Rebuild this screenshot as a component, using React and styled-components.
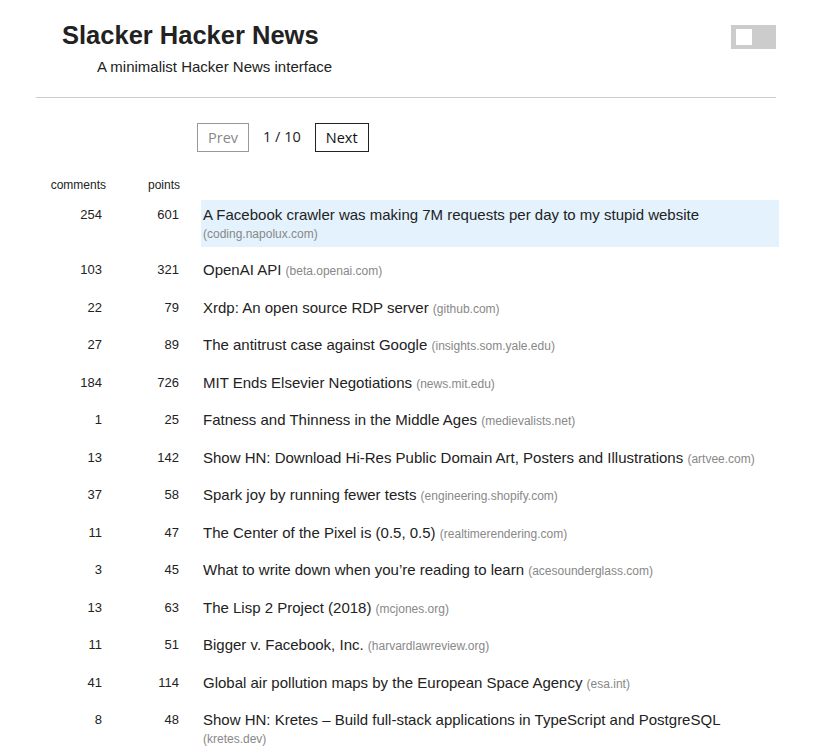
import React from "react";
import styled, { createGlobalStyle } from "styled-components";

const Global = createGlobalStyle`
  html, body { margin: 0; padding: 0; background: #fff; }
  body { font-family: "Liberation Sans", Arial, sans-serif; color: #222; }
`;

const Page = styled.div`
  width: 740px;
  margin-left: 36px;
  padding-top: 21px;
`;

const Header = styled.header`
  display: flex;
  justify-content: space-between;
  align-items: flex-start;
  padding: 0 0 0 26px;
  height: 77px;
  border-bottom: 1px solid #ccc;
  box-sizing: border-box;
`;

const Brand = styled.div`
  display: flex;
  flex-direction: column;
`;

const Title = styled.h1`
  margin: 0;
  font-size: 25.5px;
  font-weight: bold;
  line-height: 29px;
  color: #222;
`;

const Subtitle = styled.p`
  margin: 8px 0 0 35px;
  font-size: 15px;
  line-height: 17px;
  color: #222;
`;

const Toggle = styled.button`
  margin-top: 4px;
  width: 45px;
  height: 24px;
  background: #ccc;
  border: none;
  padding: 0 0 0 5px;
  display: flex;
  align-items: center;
  cursor: pointer;
`;

const Knob = styled.span`
  width: 16px;
  height: 16px;
  background: #fff;
  display: block;
`;

const Pager = styled.nav`
  display: flex;
  align-items: center;
  gap: 14px;
  margin: 25px 0 0 161px;
  font-family: "Open Sans", sans-serif;
  font-size: 14.5px;
`;

const PageButton = styled.button`
  height: 29px;
  padding: 0 10px;
  background: #fff;
  font-family: "Open Sans", sans-serif;
  font-size: 14.5px;
  color: ${(p) => (p.disabled ? "#888" : "#111")};
  border: 1px solid ${(p) => (p.disabled ? "#999" : "#222")};
  cursor: ${(p) => (p.disabled ? "default" : "pointer")};
`;

const PageInfo = styled.span`
  color: #222;
  margin-top: -2px;
`;

const Table = styled.div`
  margin-top: 26px;
  display: grid;
  grid-template-columns: 70px 53px 578px;
  column-gap: 21px;
  row-gap: 8px;
  align-items: start;
`;

const HeadCell = styled.div`
  font-size: 12px;
  line-height: 14px;
  text-align: right;
  color: #222;
`;

const NumCell = styled.div`
  font-size: 13px;
  line-height: 17px;
  text-align: right;
  padding: 6px ${(p) => p.$pr || 0}px 0 0;
  color: #222;
`;

const StoryCell = styled.div`
  padding: 6px 2px;
  font-size: 15px;
  line-height: 17.5px;
  background: ${(p) => (p.$active ? "#e3f2fd" : "transparent")};
  color: #222;
`;

const StoryLink = styled.a`
  color: #222;
  text-decoration: none;
`;

const Domain = styled.span`
  font-size: 12px;
  line-height: 1;
  color: #888;
`;

const stories = [
  [254, 601, "A Facebook crawler was making 7M requests per day to my stupid website", "coding.napolux.com"],
  [103, 321, "OpenAI API", "beta.openai.com"],
  [22, 79, "Xrdp: An open source RDP server", "github.com"],
  [27, 89, "The antitrust case against Google", "insights.som.yale.edu"],
  [184, 726, "MIT Ends Elsevier Negotiations", "news.mit.edu"],
  [1, 25, "Fatness and Thinness in the Middle Ages", "medievalists.net"],
  [13, 142, "Show HN: Download Hi-Res Public Domain Art, Posters and Illustrations", "artvee.com"],
  [37, 58, "Spark joy by running fewer tests", "engineering.shopify.com"],
  [11, 47, "The Center of the Pixel is (0.5, 0.5)", "realtimerendering.com"],
  [3, 45, "What to write down when you\u2019re reading to learn", "acesounderglass.com"],
  [13, 63, "The Lisp 2 Project (2018)", "mcjones.org"],
  [11, 51, "Bigger v. Facebook, Inc.", "harvardlawreview.org"],
  [41, 114, "Global air pollution maps by the European Space Agency", "esa.int"],
  [8, 48, "Show HN: Kretes \u2013 Build full-stack applications in TypeScript and PostgreSQL", "kretes.dev"],
];

export default function App() {
  return (
    <>
      <Global />
      <Page>
        <Header>
          <Brand>
            <Title>Slacker Hacker News</Title>
            <Subtitle>A minimalist Hacker News interface</Subtitle>
          </Brand>
          <Toggle aria-label="toggle theme">
            <Knob />
          </Toggle>
        </Header>
        <Pager>
          <PageButton disabled>Prev</PageButton>
          <PageInfo>1 / 10</PageInfo>
          <PageButton>Next</PageButton>
        </Pager>
        <Table>
          <HeadCell>comments</HeadCell>
          <HeadCell>points</HeadCell>
          <div />
          {stories.map(([c, p, t, d], i) => (
            <React.Fragment key={i}>
              <NumCell $pr={4}>{c}</NumCell>
              <NumCell $pr={1}>{p}</NumCell>
              <StoryCell $active={i === 0}>
                <StoryLink href="#">{t}</StoryLink> <Domain>({d})</Domain>
              </StoryCell>
            </React.Fragment>
          ))}
        </Table>
      </Page>
    </>
  );
}
